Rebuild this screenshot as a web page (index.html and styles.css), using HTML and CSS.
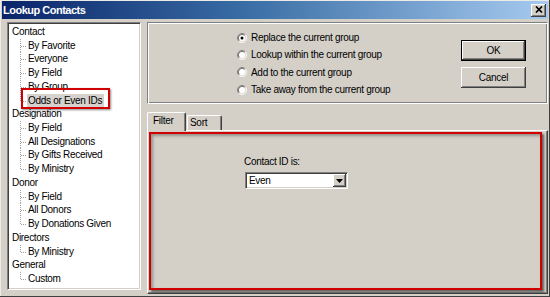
FILE: index.html
```html
<!DOCTYPE html>
<html>
<head>
<meta charset="utf-8">
<link rel="stylesheet" href="styles.css">
</head>
<body>
<div class="window">
  <div class="titlebar">
    <span class="title">Lookup Contacts</span>
    <span class="close"><svg width="8" height="7" viewBox="0 0 8 7"><path d="M1 0.5 L7 6.5 M7 0.5 L1 6.5" stroke="#000" stroke-width="1.7" fill="none"/></svg></span>
  </div>
  <div class="main">
    <div class="tree">
      <div class="node">Contact</div>
      <div class="kids">
        <div class="kid"><span class="conn"></span><span class="txt">By Favorite</span></div>
        <div class="kid"><span class="conn"></span><span class="txt">Everyone</span></div>
        <div class="kid"><span class="conn"></span><span class="txt">By Field</span></div>
        <div class="kid"><span class="conn"></span><span class="txt">By Group</span></div>
        <div class="kid last"><span class="conn"></span><span class="txt sel">Odds or Even IDs</span></div>
      </div>
      <div class="node">Designation</div>
      <div class="kids">
        <div class="kid"><span class="conn"></span><span class="txt">By Field</span></div>
        <div class="kid"><span class="conn"></span><span class="txt">All Designations</span></div>
        <div class="kid"><span class="conn"></span><span class="txt">By Gifts Received</span></div>
        <div class="kid last"><span class="conn"></span><span class="txt">By Ministry</span></div>
      </div>
      <div class="node">Donor</div>
      <div class="kids">
        <div class="kid"><span class="conn"></span><span class="txt">By Field</span></div>
        <div class="kid"><span class="conn"></span><span class="txt">All Donors</span></div>
        <div class="kid last"><span class="conn"></span><span class="txt">By Donations Given</span></div>
      </div>
      <div class="node">Directors</div>
      <div class="kids">
        <div class="kid last"><span class="conn"></span><span class="txt">By Ministry</span></div>
      </div>
      <div class="node">General</div>
      <div class="kids">
        <div class="kid last"><span class="conn"></span><span class="txt">Custom</span></div>
      </div>
      <div class="mark-sel"></div>
    </div>
    <div class="right">
      <div class="group">
        <div class="radios">
          <div class="radio"><svg class="rb" width="10" height="10" viewBox="0 0 12 12"><circle cx="6" cy="6" r="5" fill="#fff"/><path d="M2.11 9.89 A5.5 5.5 0 0 1 9.89 2.11" stroke="#808080" fill="none"/><path d="M9.89 2.11 A5.5 5.5 0 0 1 2.11 9.89" stroke="#fff" fill="none"/><path d="M2.82 9.18 A4.5 4.5 0 0 1 9.18 2.82" stroke="#404040" fill="none"/><path d="M9.18 2.82 A4.5 4.5 0 0 1 2.82 9.18" stroke="#d4d0c8" fill="none"/><circle cx="6" cy="6" r="1.8" fill="#000"/></svg><span>Replace the current group</span></div>
          <div class="radio"><svg class="rb" width="10" height="10" viewBox="0 0 12 12"><circle cx="6" cy="6" r="5" fill="#fff"/><path d="M2.11 9.89 A5.5 5.5 0 0 1 9.89 2.11" stroke="#808080" fill="none"/><path d="M9.89 2.11 A5.5 5.5 0 0 1 2.11 9.89" stroke="#fff" fill="none"/><path d="M2.82 9.18 A4.5 4.5 0 0 1 9.18 2.82" stroke="#404040" fill="none"/><path d="M9.18 2.82 A4.5 4.5 0 0 1 2.82 9.18" stroke="#d4d0c8" fill="none"/></svg><span>Lookup within the current group</span></div>
          <div class="radio"><svg class="rb" width="10" height="10" viewBox="0 0 12 12"><circle cx="6" cy="6" r="5" fill="#fff"/><path d="M2.11 9.89 A5.5 5.5 0 0 1 9.89 2.11" stroke="#808080" fill="none"/><path d="M9.89 2.11 A5.5 5.5 0 0 1 2.11 9.89" stroke="#fff" fill="none"/><path d="M2.82 9.18 A4.5 4.5 0 0 1 9.18 2.82" stroke="#404040" fill="none"/><path d="M9.18 2.82 A4.5 4.5 0 0 1 2.82 9.18" stroke="#d4d0c8" fill="none"/></svg><span>Add to the current group</span></div>
          <div class="radio"><svg class="rb" width="10" height="10" viewBox="0 0 12 12"><circle cx="6" cy="6" r="5" fill="#fff"/><path d="M2.11 9.89 A5.5 5.5 0 0 1 9.89 2.11" stroke="#808080" fill="none"/><path d="M9.89 2.11 A5.5 5.5 0 0 1 2.11 9.89" stroke="#fff" fill="none"/><path d="M2.82 9.18 A4.5 4.5 0 0 1 9.18 2.82" stroke="#404040" fill="none"/><path d="M9.18 2.82 A4.5 4.5 0 0 1 2.82 9.18" stroke="#d4d0c8" fill="none"/></svg><span>Take away from the current group</span></div>
        </div>
        <div class="buttons">
          <div class="btn default">OK</div>
          <div class="btn">Cancel</div>
        </div>
      </div>
      <div class="tabs">
        <div class="tab active">Filter</div>
        <div class="tab">Sort</div>
      </div>
      <div class="panel">
        <div class="highlight">
          <div class="label">Contact ID is:</div>
          <div class="select">
            <span class="value">Even</span>
            <span class="drop"><svg width="7" height="4" viewBox="0 0 7 4"><path d="M0 0 H7 L3.5 4 Z" fill="#000"/></svg></span>
          </div>
        </div>
      </div>
    </div>
  </div>
</div>
</body>
</html>
```
FILE: styles.css
```css
* { box-sizing: border-box; }
html, body { margin: 0; padding: 0; }
body {
  width: 550px;
  height: 297px;
  overflow: hidden;
  font-family: "Liberation Sans", Arial, sans-serif;
  font-size: 10px;
  letter-spacing: -0.3px;
  color: #000;
  background: #d4d0c8;
}
.window {
  width: 550px;
  height: 297px;
  background: #d4d0c8;
  display: flex;
  flex-direction: column;
  box-shadow: inset -1px -1px #404040, inset 1px 1px #ecebe7;
}
.titlebar {
  margin: 1px 2px 0 2px;
  height: 18px;
  background: linear-gradient(to right, #0a246a 0%, #3a6ea5 45%, #a6caf0 100%);
  display: flex;
  align-items: center;
  justify-content: space-between;
  padding: 0 2px 0 1px;
}
.title {
  color: #fff;
  font-weight: bold;
  font-size: 11px;
  letter-spacing: -0.5px;
}
.close {
  width: 15px;
  height: 13px;
  background: #d4d0c8;
  box-shadow: inset -1px -1px #404040, inset 1px 1px #fff, inset -2px -2px #808080;
  display: flex;
  align-items: center;
  justify-content: center;
  padding-bottom: 1px;
}
.main {
  display: flex;
  gap: 6px;
  padding: 3px 2px 0 7px;
}
.tree {
  position: relative;
  width: 134px;
  height: 268px;
  background: #fff;
  border: 1px solid;
  border-color: #808080 #fff #fff #808080;
  box-shadow: inset 1px 1px #404040, inset -1px -1px #d4d0c8;
  padding: 2px 0 0 4px;
}
.node, .kid {
  height: 13.72px;
  line-height: 13.72px;
  white-space: nowrap;
}
.kids { margin-left: 8px; }
.kid { display: flex; }
.conn {
  width: 7px;
  flex: none;
  background:
    repeating-linear-gradient(to bottom, #a0a0a0 0 1px, transparent 1px 2px) left top / 1px 100% no-repeat,
    repeating-linear-gradient(to right, #a0a0a0 0 1px, transparent 1px 2px) 1px 7px / 6px 1px no-repeat;
}
.kid.last .conn {
  background:
    repeating-linear-gradient(to bottom, #a0a0a0 0 1px, transparent 1px 2px) left top / 1px 8px no-repeat,
    repeating-linear-gradient(to right, #a0a0a0 0 1px, transparent 1px 2px) 1px 7px / 6px 1px no-repeat;
}
.txt { padding-left: 1px; }
.txt.sel {
  background: #d6d3ce;
  padding: 0 2px 0 1px;
}
.mark-sel {
  position: absolute;
  left: 13px;
  top: 65px;
  width: 89px;
  height: 21px;
  border: 2px solid #d10000;
  box-shadow: 1px 1px 2px rgba(0,0,0,0.45);
}
.right {
  width: 401px;
  display: flex;
  flex-direction: column;
}
.group {
  height: 82px;
  border: 1px solid;
  border-color: #808080 #fff #fff #808080;
  box-shadow: inset 1px 1px #fff, inset -1px -1px #808080;
  display: flex;
  justify-content: space-between;
  align-items: flex-start;
  padding: 0 21px 0 89px;
}
.radios {
  padding-top: 6px;
  display: flex;
  flex-direction: column;
}
.radio {
  height: 17.3px;
  display: flex;
  align-items: center;
  gap: 4px;
}
.rb { flex: none; }
.buttons {
  margin-top: 17px;
  display: flex;
  flex-direction: column;
  gap: 6px;
}
.btn {
  width: 65px;
  height: 21px;
  display: flex;
  align-items: center;
  justify-content: center;
  background: #d4d0c8;
  box-shadow: inset -1px -1px #404040, inset 1px 1px #fff, inset -2px -2px #808080;
}
.btn.default {
  border: 1px solid #000;
  box-shadow: inset -1px -1px #404040, inset 1px 1px #fff, inset -2px -2px #808080;
}
.tabs {
  margin-top: 8px;
  height: 18px;
  display: flex;
  align-items: flex-end;
  gap: 1px;
  position: relative;
  z-index: 1;
}
.tab {
  height: 15px;
  width: 35px;
  padding-left: 2px;
  line-height: 14px;
  background: #d4d0c8;
  border-top: 1px solid #fff;
  border-left: 1px solid #fff;
  border-right: 1px solid #404040;
  border-radius: 2px 2px 0 0;
  box-shadow: inset -1px 0 #808080;
}
.tab.active {
  height: 19px;
  width: 39px;
  margin-bottom: -1px;
  padding-left: 5px;
  line-height: 15px;
}
.panel {
  height: 164px;
  border: 1px solid;
  border-color: #fff #404040 #404040 #fff;
  box-shadow: inset -1px -1px #808080;
  padding: 1px 5px 3px 1px;
  display: flex;
}
.highlight {
  flex: 1;
  border: 2px solid #d10000;
  box-shadow: 2px 2px 2px rgba(0,0,0,0.55), inset 2px 2px 3px rgba(0,0,0,0.3);
  padding: 22px 0 0 93px;
}
.label {
  height: 12px;
  line-height: 12px;
}
.select {
  margin-top: 4px;
  margin-left: 1px;
  width: 103px;
  height: 17px;
  background: #fff;
  border: 1px solid;
  border-color: #808080 #fff #fff #808080;
  box-shadow: inset 1px 1px #404040, inset -1px -1px #d4d0c8;
  display: flex;
  align-items: center;
  justify-content: space-between;
  padding: 1px 1px 1px 3px;
}
.value { line-height: 13px; }
.drop {
  width: 13px;
  height: 13px;
  background: #d4d0c8;
  box-shadow: inset -1px -1px #404040, inset 1px 1px #fff, inset -2px -2px #808080;
  display: flex;
  align-items: center;
  justify-content: center;
}
```
